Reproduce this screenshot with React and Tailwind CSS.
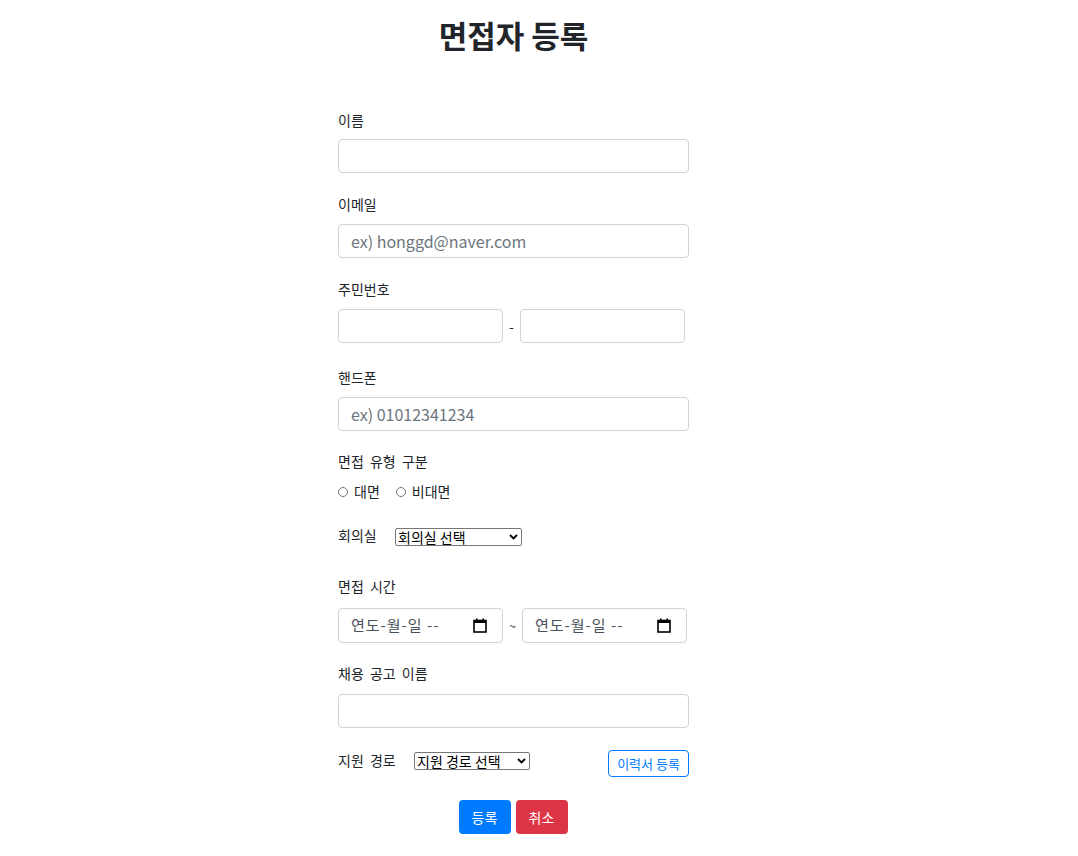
import React from "react";

const font = { fontFamily: '"Noto Sans CJK KR", "Noto Sans", sans-serif' };

function Label({ children, className = "" }) {
  return (
    <div className={"text-[14px] leading-[21px] text-[#212529] [word-spacing:3px] " + className}>{children}</div>
  );
}

function TextInput({ placeholder, className = "" }) {
  return (
    <input
      type="text"
      placeholder={placeholder}
      className={
        "block h-[34px] rounded-[4px] border border-[#ced4da] bg-white px-3 text-[16px] text-[#495057] placeholder:text-[#6c757d] outline-none " +
        className
      }
    />
  );
}

function Calendar() {
  return (
    <svg width="14" height="15" viewBox="0 0 14 15" className="shrink-0">
      <rect x="1" y="2.5" width="12" height="11.5" fill="none" stroke="#000" strokeWidth="1.6" />
      <rect x="1" y="2" width="12" height="3" fill="#000" />
      <rect x="3" y="0.5" width="1.6" height="2.5" fill="#000" />
      <rect x="9.4" y="0.5" width="1.6" height="2.5" fill="#000" />
    </svg>
  );
}

function DateInput() {
  return (
    <div className="flex h-[35px] w-[165px] items-center justify-between rounded-[4px] border border-[#ced4da] bg-white pl-3 pr-[15px]">
      <span className="text-[15px] tracking-[1px] text-[#495057]">연도-월-일 --</span>
      <Calendar />
    </div>
  );
}

function Radio({ label }) {
  return (
    <label className="flex items-center">
      <span className="inline-block h-[10px] w-[10px] rounded-full border border-[#767676] bg-white" />
      <span className="ml-[6px] text-[14px] leading-[21px] text-[#212529]">{label}</span>
    </label>
  );
}

function Select({ text, width }) {
  return (
    <div
      className={
        "flex h-[18px] items-center justify-between rounded-[2px] border border-[#767676] bg-white pl-[2px] pr-[3px] text-[14px] leading-none text-black " +
        width
      }
    >
      <span>{text}</span>
      <svg width="9" height="6" viewBox="0 0 9 6">
        <path d="M1 1 L4.5 4.5 L8 1" fill="none" stroke="#000" strokeWidth="1.8" />
      </svg>
    </div>
  );
}

export default function App() {
  return (
    <div className="min-h-[856px] w-full bg-white" style={font}>
      <div className="ml-[338px] w-[351px]">
        <h2 className="pt-[16px] text-center text-[31px] font-bold leading-[38px] text-[#212529]">
          면접자 등록
        </h2>

        <Label className="mt-[56px]">이름</Label>
        <TextInput className="mt-2 w-[351px]" />

        <Label className="mt-[21px]">이메일</Label>
        <TextInput className="mt-[9px] w-[351px]" placeholder="ex) honggd@naver.com" />

        <Label className="mt-[21px]">주민번호</Label>
        <div className="mt-[9px] flex items-center">
          <TextInput className="w-[165px]" />
          <span className="mx-[5px] w-[7px] text-center text-[14px] text-[#212529]">-</span>
          <TextInput className="w-[165px]" />
        </div>

        <Label className="mt-[24px]">핸드폰</Label>
        <TextInput className="mt-[9px] w-[351px]" placeholder="ex) 01012341234" />

        <Label className="mt-[20px]">면접 유형 구분</Label>
        <div className="mt-[9px] flex items-center gap-4">
          <Radio label="대면" />
          <Radio label="비대면" />
        </div>

        <div className="mt-[23px] flex items-center">
          <Label className="w-[57px]">회의실</Label>
          <div className="mt-[2px]">
            <Select text="회의실 선택" width="w-[127px]" />
          </div>
        </div>

        <Label className="mt-[30px]">면접 시간</Label>
        <div className="mt-[11px] flex items-center">
          <DateInput />
          <span className="mx-[5px] w-[9px] text-center text-[12px] text-[#212529]">~</span>
          <DateInput />
        </div>

        <Label className="mt-[20px]">채용 공고 이름</Label>
        <TextInput className="mt-[10px] w-[351px]" />

        <div className="mt-[22px] flex items-start justify-between">
          <div className="flex items-start">
            <Label className="w-[76px]">지원 경로</Label>
            <div className="mt-[2px]">
              <Select text="지원 경로 선택" width="w-[116px]" />
            </div>
          </div>
          <button className="h-[27px] w-[81px] rounded-[4px] border border-[#007bff] bg-white text-[13px] text-[#007bff]">
            이력서 등록
          </button>
        </div>

        <div className="mt-[23px] flex justify-center gap-[5px] pr-[1px]">
          <button className="h-[34px] w-[52px] rounded-[4px] bg-[#007bff] text-[14px] text-white">등록</button>
          <button className="h-[34px] w-[52px] rounded-[4px] bg-[#dc3545] text-[14px] text-white">취소</button>
        </div>
      </div>
    </div>
  );
}
